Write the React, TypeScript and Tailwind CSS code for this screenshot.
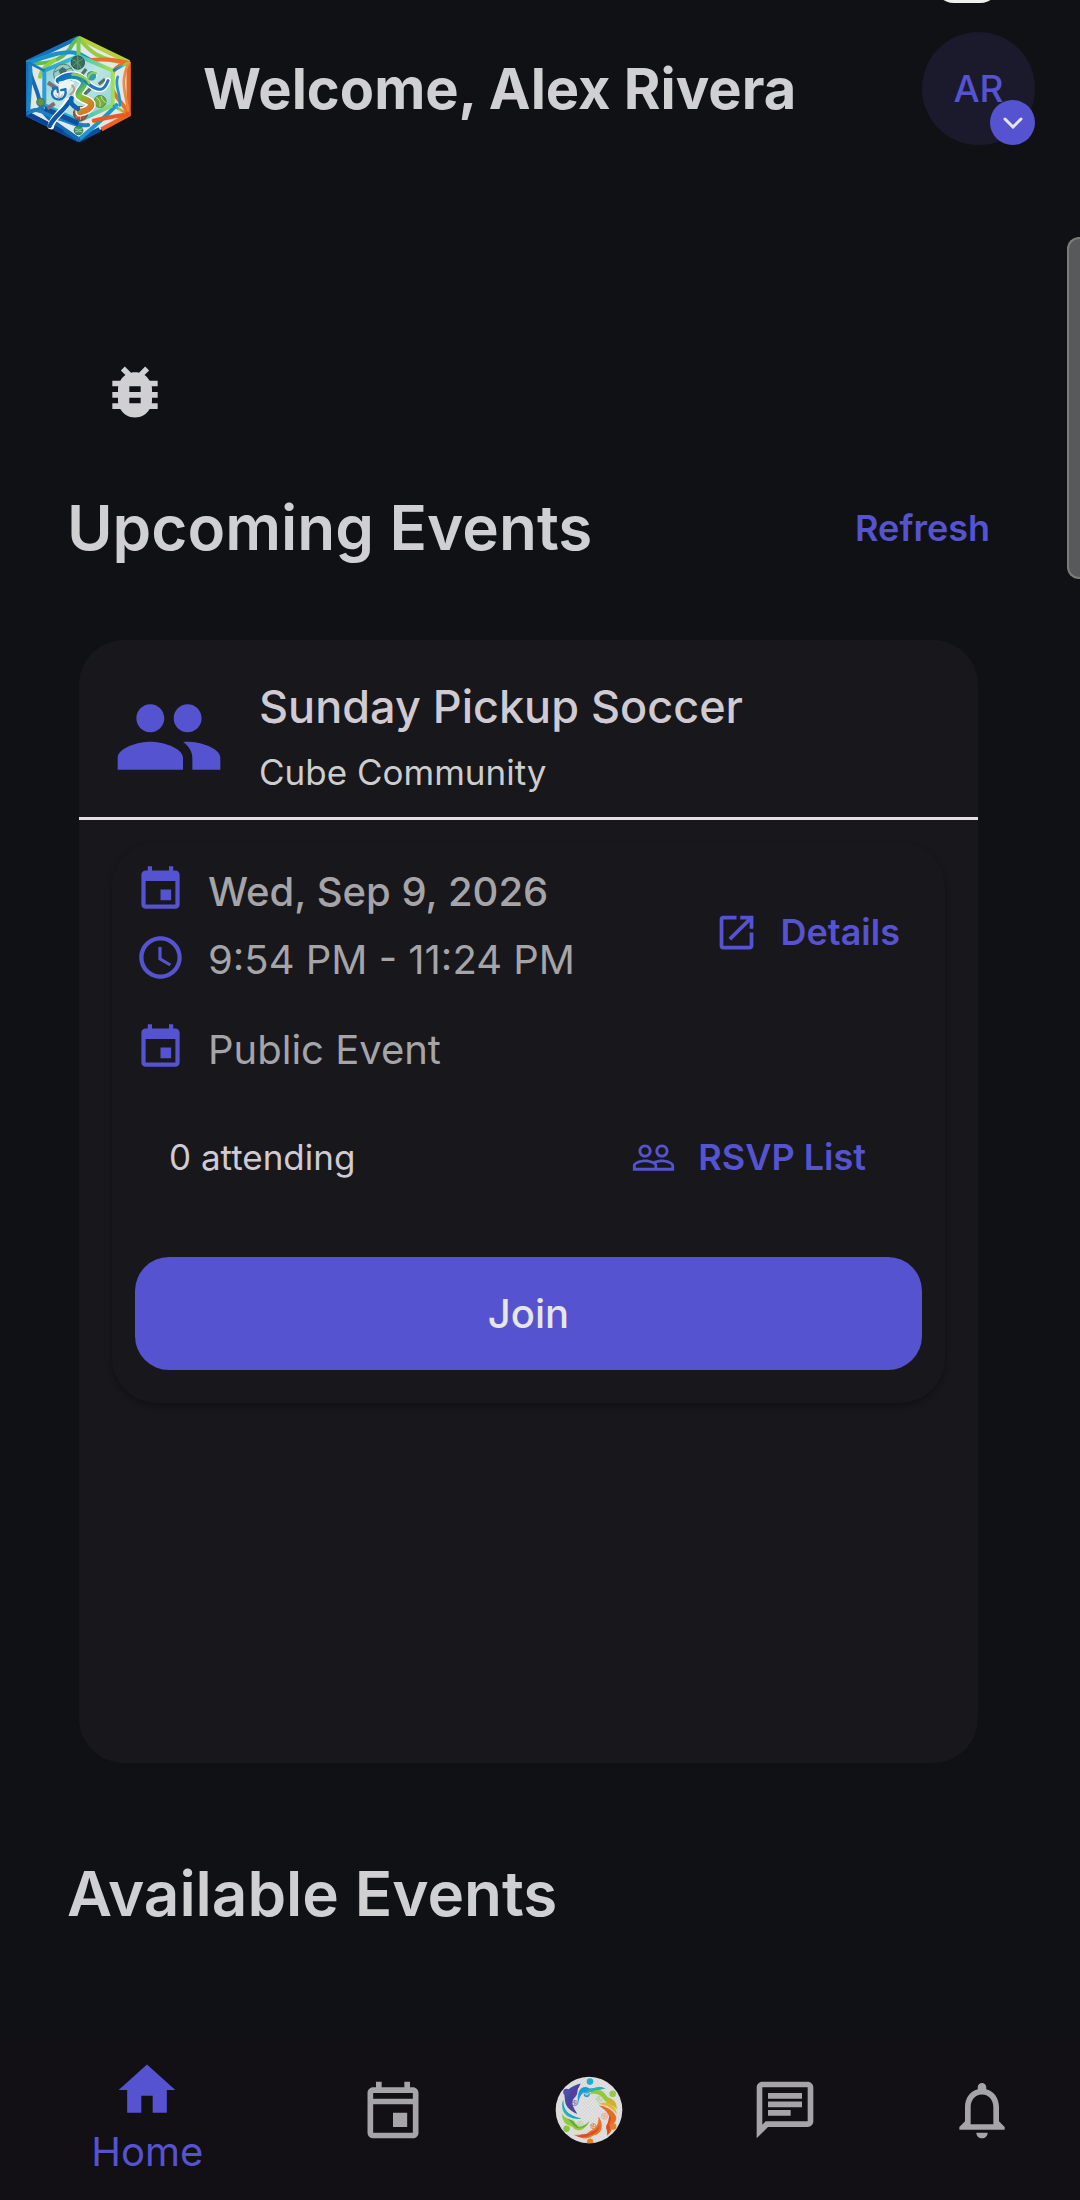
import React from 'react';
import {
  MdAccessTime,
  MdBugReport,
  MdEvent,
  MdHome,
  MdNotificationsNone,
  MdOpenInNew,
  MdOutlineChat,
  MdOutlineEvent,
  MdPeople,
  MdPeopleOutline,
} from 'react-icons/md';

const CubeLogo = () => (
  <svg viewBox="18 15 316 320" className="h-[107px] w-[105px] shrink-0" role="img" aria-label="Cube logo">
    <defs>
      <linearGradient id="cubeEdge" x1="0" y1="0.2" x2="1" y2="0.6">
        <stop offset="0" stopColor="#1478c4" />
        <stop offset="0.35" stopColor="#19a3cf" />
        <stop offset="0.58" stopColor="#8ed044" />
        <stop offset="0.82" stopColor="#e8962a" />
        <stop offset="1" stopColor="#e4571f" />
      </linearGradient>
      <linearGradient id="cubeInner" x1="0" y1="0.4" x2="1" y2="0.3">
        <stop offset="0" stopColor="#2a9fd6" />
        <stop offset="0.55" stopColor="#3fc3c8" />
        <stop offset="1" stopColor="#a3e052" />
      </linearGradient>
      <linearGradient id="runner" x1="0.1" y1="0" x2="0.9" y2="1">
        <stop offset="0" stopColor="#0d6fb8" />
        <stop offset="0.35" stopColor="#1691b4" />
        <stop offset="0.6" stopColor="#7cc63c" />
        <stop offset="1" stopColor="#ee6a22" />
      </linearGradient>
      <linearGradient id="glass" x1="0" y1="0" x2="1" y2="1">
        <stop offset="0" stopColor="#84c8d2" />
        <stop offset="0.5" stopColor="#bce6e4" />
        <stop offset="1" stopColor="#86d0d4" />
      </linearGradient>
    </defs>
    {/* outer hexagon */}
    <path d="M176 19 330 94V254L177 332 21 254V94Z" fill="#e2e7ea" />
    <path d="M176 22 22 95V253L177 328" fill="none" stroke="#146fbd" strokeWidth="13" />
    <path d="M21 252 177 330 240 298" fill="none" stroke="#0b4fa0" strokeWidth="15" />
    <path d="M176 22 328 96" fill="none" stroke="#b8cf3c" strokeWidth="13" />
    <path d="M327 94V254L245 298" fill="none" stroke="#e8641f" strokeWidth="13" />
    {/* woven star bands */}
    <g fill="none" strokeLinecap="round" strokeWidth="12">
      <path d="M24 97C80 105 125 90 150 55 160 35 170 28 178 24" stroke="#5dbb55" />
      <path d="M24 99C70 80 135 60 168 68 190 72 200 85 215 90" stroke="#1a93cd" />
      <path d="M178 25C205 55 225 88 326 98" stroke="#93cb43" />
      <path d="M205 91C260 82 300 92 326 98 285 105 268 130 275 165 280 200 310 215 327 252" stroke="#e9702a" />
      <path d="M290 225C262 255 235 280 178 328" stroke="#1f96cb" />
      <path d="M222 272C260 262 290 258 327 252" stroke="#e85a22" />
      <path d="M23 100C35 155 55 180 60 220 68 265 120 285 176 328" stroke="#136bb5" />
      <path d="M24 250C55 222 80 260 125 268 150 274 165 290 205 285" stroke="#1f7fc4" />
      <path d="M60 140C65 115 80 105 104 90" stroke="#91d13d" />
      <path d="M30 105C35 140 28 180 25 245" stroke="#1a82c6" />
      <path d="M24 250 125 304" stroke="#0a4496" />
      <path d="M326 100C300 160 318 185 325 240" stroke="#f0893a" strokeWidth="8" />
      <path d="M294 140C283 170 305 190 300 226" stroke="#1f96cb" strokeWidth="8" />
    </g>
    {/* inner cube */}
    <path d="M176 77 279 121V225L177 272 73 225V121Z" fill="url(#glass)" stroke="url(#cubeInner)" strokeWidth="12" />
    <path d="M176 22V78" stroke="#77c94d" strokeWidth="12" />
    <path d="M24 96 74 122M20 252 75 226" stroke="#177bc2" strokeWidth="8" />
    <path d="M328 96 280 122M327 254 280 226" stroke="url(#cubeEdge)" strokeWidth="8" />
    <path d="M74 235 176 280" stroke="#0b51a1" strokeWidth="15" />
    {/* sport balls */}
    <g strokeWidth="3" fill="none">
      <circle cx="174" cy="97" r="20" fill="#39705a" stroke="#28513f" />
      <path d="M157 88C170 92 180 102 184 115M158 108C166 100 180 90 190 86M174 77V117" stroke="#5f9a78" />
      <circle cx="131" cy="132" r="30" fill="#9cc8c2" stroke="#4c8378" />
      <path d="m116 119 12-9 13 8-4 15h-16Z" fill="#3f7465" />
      <path d="m103 126 13-7m25-1 15-5m-19 20 10 15m-26-15-8 13" stroke="#4c8378" />
      <circle cx="241" cy="214" r="18" fill="#77ad3b" stroke="#4f8a35" />
      <path d="M228 202c12 5 16 16 12 29M244 197c1 10 7 17 15 20" stroke="#c4e398" />
      <circle cx="182" cy="250" r="21" fill="#a4563f" stroke="#723b30" />
      <path d="M164 241c14-3 27 1 36 14M182 230v40M168 264c8-12 19-19 31-20" stroke="#d28d70" />
      <circle cx="176" cy="301" r="13" fill="#3f9472" stroke="#297057" />
      <path d="M165 296q12 8 23 0M165 306q12-6 23 0" stroke="#a1d38a" />
      <circle cx="62" cy="216" r="12" fill="#638f50" stroke="#497a47" />
      <path d="m84 157 24 16M82 235 104 220" stroke="#846c72" strokeWidth="12" />
      <path d="m237 162 19-15M190 196l22-20M187 132l12-16" stroke="#596f6d" strokeWidth="10" />
    </g>
    {/* running figure */}
    <g fill="none" strokeLinecap="round" strokeLinejoin="round">
      <path d="M117 151C140 132 170 132 188 148 206 165 168 184 177 197 187 209 218 211 214 226 209 240 192 243 180 246" stroke="#fff" strokeWidth="27" />
      <path d="M93 288C96 262 130 248 143 215" stroke="#fff" strokeWidth="20" />
      <path d="M196 150C211 165 230 183 247 176 257 172 260 162 265 151" stroke="#fff" strokeWidth="17" />
      <path d="M117 151C140 132 170 132 188 148 206 165 168 184 177 197 187 209 218 211 214 226 209 240 192 243 180 246" stroke="url(#runner)" strokeWidth="19" />
      <path d="M148 215C130 245 101 260 89 288" stroke="#0e57a8" strokeWidth="13" />
      <path d="M155 204C148 222 164 229 174 236" stroke="#0f61ad" strokeWidth="14" />
      <path d="M196 153C211 165 230 183 247 176 257 172 260 162 265 151" stroke="#2478b9" strokeWidth="9" />
      <path d="M158 133C180 130 205 148 208 159" stroke="#8bd13f" strokeWidth="8" />
      <path d="M117 156C140 150 155 150 162 158 153 174 140 177 137 205 117 211 98 201 97 185 98 175 108 168 118 170" fill="#eef3f4" stroke="#eef3f4" strokeWidth="3" />
      <path d="M107 174C92 180 93 203 111 207 130 212 141 195 136 178M99 174l13-2 2 14M137 177l-13 3" stroke="#1673b7" strokeWidth="7" />
      <path d="M117 184v18M108 194c5 12 15 12 19 0" stroke="#9aa9b0" strokeWidth="3" />
      <path d="M151 193C164 184 168 176 157 166" stroke="#d59578" strokeWidth="6" />
      <circle cx="215" cy="137" r="16" fill="#2b9fb5" stroke="#dff0ea" strokeWidth="3" />
      <path d="M204 144c5-17 16-18 25-15" stroke="#8ed04b" strokeWidth="6" />
    </g>
  </svg>
);

const CircleLogo = () => (
  <svg viewBox="44 47 204 206" className="size-[68px]" aria-hidden="true">
    <defs>
      <pattern id="checks" width="10" height="10" patternUnits="userSpaceOnUse">
        <path d="M0 0h10v10H0z" fill="#e3e3e3" />
        <path d="M0 0h5v5H0zM5 5h5v5H5z" fill="#d6d6d6" />
      </pattern>
    </defs>
    <circle cx="146" cy="150" r="101" fill="url(#checks)" />
    <path d="M121 70C91 78 69 95 72 111 75 125 70 143 110 161 99 142 88 126 103 112 116 101 105 93 121 70Z" fill="#3f4ba5" />
    <path d="M119 75C100 99 108 100 94 113 83 124 92 144 110 161 79 149 80 124 87 111 95 98 94 87 119 75Z" fill="#5d3b96" />
    <path d="M113 132C107 88 126 74 145 83 157 90 174 72 196 86 176 85 166 102 148 95 130 89 117 104 113 132Z" fill="#1a9dd0" />
    <path d="M144 84C164 91 174 72 196 86 174 85 164 101 144 93Z" fill="#28b5a8" />
    <path d="M145 102C173 78 191 93 199 107 206 118 225 111 230 148 219 127 199 133 190 117 181 102 166 99 145 102Z" fill="#91c83e" />
    <path d="M203 114C221 117 231 127 230 148 218 131 205 136 198 126Z" fill="#c4b52c" />
    <path d="M174 132C202 119 226 134 231 163 220 149 203 134 174 132Z" fill="#ecb52d" />
    <path d="M176 136C215 140 237 170 226 184 213 197 221 213 201 227 207 208 193 207 205 189 215 172 202 153 176 136Z" fill="#e86b25" />
    <path d="M208 166C221 181 201 186 209 201 211 211 208 222 201 227 204 207 191 206 203 189Z" fill="#db4d26" />
    <path d="M175 170C194 197 183 222 165 226 150 229 144 247 100 226 125 223 134 227 146 216 163 207 176 200 175 170Z" fill="#ea7425" />
    <path d="M110 230C135 218 138 229 153 217 169 212 174 205 178 195 178 219 156 224 145 229 132 235 122 233 110 230Z" fill="#dc4e25" />
    <path d="M148 183C130 219 105 214 98 203 88 192 68 202 64 161 81 184 100 175 105 190 117 204 134 199 148 183Z" fill="#91ca3d" />
    <path d="M82 177C96 181 99 183 105 194 119 205 134 199 148 183 130 211 109 208 101 198Z" fill="#5faa36" />
    <path d="M68 119C57 149 73 180 122 177 105 168 68 167 68 119Z" fill="#27b3c1" />
    <path d="M68 119C60 145 76 162 122 177 86 178 67 151 68 119Z" fill="#1693bf" opacity="0.6" />
    <circle cx="149" cy="64" r="10" fill="#20acd5" />
    <circle cx="78" cy="96" r="10" fill="#544ca9" />
    <circle cx="218" cy="101" r="10" fill="#98c946" />
    <circle cx="78" cy="207" r="10" fill="#8cc63c" />
    <circle cx="219" cy="200" r="10" fill="#e87d25" />
    <path d="M140 251v-8a10 10 0 0 1 19 0v8Z" fill="#e87d25" />
    <g fill="none" strokeWidth="2.5">
      <circle cx="103" cy="129" r="8" stroke="#8778b5" />
      <path d="M96 126l14 6M103 121v16" stroke="#8778b5" />
      <circle cx="139" cy="102" r="8" fill="#4fb0dc" stroke="#278abe" />
      <path d="M132 100q7 5 14 0" stroke="#d2eaf5" />
      <circle cx="178" cy="117" r="9" stroke="#add38a" />
      <path d="M170 115l16 5M179 109l-4 16" stroke="#add38a" />
      <circle cx="193" cy="169" r="9" stroke="#e3a787" />
      <path d="M185 166l16 6M195 161l-4 16" stroke="#e3a787" />
      <circle cx="159" cy="199" r="8" stroke="#e47c49" />
      <path d="M152 196l14 6M160 191l-3 16" stroke="#e47c49" />
      <circle cx="119" cy="193" r="9" stroke="#b5d69b" />
      <path d="M111 190l16 6M120 185l-3 16" stroke="#b5d69b" />
    </g>
  </svg>
);

const details = [
  { icon: MdEvent, text: 'Wed, Sep 9, 2026', className: 'font-medium' },
  { icon: MdAccessTime, text: '9:54 PM - 11:24 PM', className: 'mt-3' },
  { icon: MdEvent, text: 'Public Event', className: 'mt-[34px]' },
];

const navItems = [
  { label: 'Events', icon: MdOutlineEvent },
  { label: 'Community', icon: null },
  { label: 'Messages', icon: MdOutlineChat },
  { label: 'Notifications', icon: MdNotificationsNone },
];

const Header = () => (
  <header className="flex items-center pt-8 pr-[45px] pl-[26px]">
    <CubeLogo />
    <h1 className="ml-[72px] flex-1 text-[56px] leading-[72px] font-bold">Welcome, Alex Rivera</h1>
    <button
      type="button"
      aria-label="Account menu"
      className="relative size-[113px] shrink-0 rounded-full bg-[#1b1a2d] text-[37px] font-medium text-[#5653d0]"
    >
      AR
      <span className="absolute right-0 bottom-0 flex size-[45px] items-center justify-center rounded-full bg-[#5653d0] text-[#e6e6e6]">
        <svg viewBox="0 0 20 12" className="h-3 w-5" fill="none" stroke="currentColor" strokeWidth="3" strokeLinecap="round">
          <path d="m2 2 8 8 8-8" />
        </svg>
      </span>
    </button>
  </header>
);

const EventCard = () => (
  <article className="mt-[62px] mr-[102px] ml-[79px] min-h-[1123px] rounded-[45px] bg-[#18171b]">
    {/* group */}
    <div className="flex items-center gap-[34px] border-b-3 border-[#e2dfe3] px-[34px] pt-[34px] pb-[17px]">
      <MdPeople className="size-[112px] shrink-0 text-[#5653d0]" />
      <div>
        <h3 className="text-[45px] leading-[66px] font-medium text-[#d0cad2]">Sunday Pickup Soccer</h3>
        <p className="mt-1 text-[35px] leading-[56px] text-[#cdcdce]">Cube Community</p>
      </div>
    </div>

    {/* event */}
    <div className="mx-[33px] mt-[22px] rounded-[45px] px-[23px] pt-[22px] pb-[33px] shadow-[0_3px_5px_#111214]">
      <div className="flex items-start justify-between">
        <ul className="text-[40px] leading-[56px] text-[#a5a4a8]">
          {details.map(({ icon: Icon, text, className }) => (
            <li key={text} className={`flex items-start gap-[22px] ${className}`}>
              <Icon className="size-[51px] shrink-0 text-[#5653d0]" />
              <span>{text}</span>
            </li>
          ))}
        </ul>
        <button type="button" className="mt-8 flex items-center gap-[22px] px-[22px] py-2 text-[36px] leading-[56px] font-semibold text-[#5653d0]">
          <MdOpenInNew className="size-[45px]" />
          Details
        </button>
      </div>

      <div className="mt-[43px] flex items-center justify-between pr-[56px] pl-[34px]">
        <p className="text-[35px] leading-[56px] text-[#d0cad2]">0 attending</p>
        <button type="button" className="flex items-center gap-[22px] py-2 text-[36px] leading-[56px] font-semibold text-[#5653d0]">
          <MdPeopleOutline className="size-[45px]" />
          RSVP List
        </button>
      </div>

      <button type="button" className="mt-16 h-[113px] w-full rounded-[34px] bg-[#5653d0] text-[40px] font-medium text-[#e6e6e6]">
        Join
      </button>
    </div>
  </article>
);

const BottomNav = () => (
  <nav className="grid grid-cols-[3fr_2fr_2fr_2fr_2fr] bg-[#120f15] pt-4 pb-5 text-[#a5a4a8]">
    <a href="#home" className="flex flex-col items-center text-[40px] leading-[56px] text-[#5653d0]">
      <MdHome className="size-[68px]" />
      <span>Home</span>
    </a>
    {navItems.map(({ label, icon: Icon }) => (
      <a key={label} href={`#${label.toLowerCase()}`} aria-label={label} className="flex justify-center pt-5">
        {Icon ? <Icon className="size-[68px]" /> : <CircleLogo />}
      </a>
    ))}
  </nav>
);

export default function App() {
  return (
    <div className="relative flex min-h-screen flex-col overflow-hidden bg-[#101115] font-['Inter','Noto_Sans',sans-serif] text-[#d0d0d3]">
      {/* floating pill and scroll thumb lie over the page */}
      <div className="absolute -top-[37px] right-20 h-10 w-[66px] rounded-[20px] bg-[#efefef]" />
      <div className="absolute top-[237px] right-0 h-[342px] w-[13px] rounded-l-xl border-2 border-r-0 border-[#7b7b7b] bg-[#58595a]" />

      <Header />

      <main className="flex flex-1 flex-col pt-[179px]">
        <button type="button" aria-label="Report a bug" className="ml-[67px] flex size-[135px] items-center justify-center">
          <MdBugReport className="size-[68px]" />
        </button>

        <section>
          <div className="mt-[19px] flex items-center justify-between pr-[90px] pl-[67px]">
            <h2 className="text-[62px] leading-[100px] font-semibold">Upcoming Events</h2>
            <button type="button" className="text-[36px] font-semibold text-[#5653d0]">
              Refresh
            </button>
          </div>
          <EventCard />
        </section>

        <section className="mt-[81px] px-[67px]">
          <h2 className="text-[62px] leading-[100px] font-semibold">Available Events</h2>
        </section>
      </main>

      <BottomNav />
    </div>
  );
}
